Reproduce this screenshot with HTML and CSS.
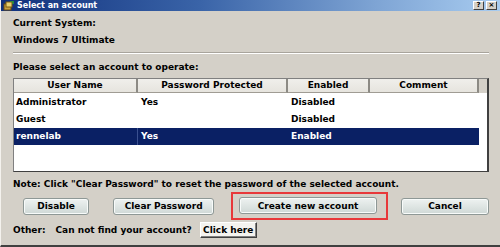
FILE: index.html
```html
<!DOCTYPE html>
<html>
<head>
<meta charset="utf-8">
<link rel="stylesheet" href="styles.css">
</head>
<body>
<div class="window">
  <div class="titlebar">
    <div class="title">
      <svg class="app-icon" width="11" height="10" viewBox="0 0 11 10">
        <rect x="1" y="3" width="7" height="6" fill="#c8a040" stroke="#6a4a10" stroke-width="1"/>
        <rect x="3" y="1" width="6" height="5" fill="#e8d070" stroke="#7a5a10" stroke-width="1"/>
        <path d="M7 0 L10 0 L10 3" fill="none" stroke="#30a030" stroke-width="1.5"/>
      </svg>
      <span>Select an account</span>
    </div>
    <div class="caption-buttons">
      <span class="cap-btn">?</span>
      <span class="cap-btn">×</span>
    </div>
  </div>
  <div class="content">
    <div class="label first">Current System:</div>
    <div class="label">Windows 7 Ultimate</div>
    <div class="separator"></div>
    <div class="label">Please select an account to operate:</div>
    <div class="table">
      <div class="thead">
        <div class="th c1">User Name</div>
        <div class="th c2">Password Protected</div>
        <div class="th c3">Enabled</div>
        <div class="th c4">Comment</div>
        <div class="th-fill"></div>
      </div>
      <div class="row">
        <div class="td c1">Administrator</div>
        <div class="td c2">Yes</div>
        <div class="td c3">Disabled</div>
        <div class="td c4"></div>
      </div>
      <div class="row">
        <div class="td c1">Guest</div>
        <div class="td c2"></div>
        <div class="td c3">Disabled</div>
        <div class="td c4"></div>
      </div>
      <div class="row selected">
        <div class="td c1">rennelab</div>
        <div class="td c2">Yes</div>
        <div class="td c3">Enabled</div>
        <div class="td c4"></div>
      </div>
    </div>
    <div class="label note">Note: Click "Clear Password" to reset the password of the selected account.</div>
    <div class="buttons">
      <button class="btn b-disable">Disable</button>
      <button class="btn b-clear">Clear Password</button>
      <div class="highlight"><button class="btn b-create">Create new account</button></div>
      <button class="btn b-cancel">Cancel</button>
    </div>
    <div class="other">
      <span class="label">Other:</span>
      <span class="label find">Can not find your account?</span>
      <button class="classic-btn">Click here</button>
    </div>
  </div>
</div>
</body>
</html>
```

FILE: styles.css
```css
* { box-sizing: border-box; }
html, body {
  margin: 0;
  padding: 0;
  background: #d4d0c8;
}
.window {
  width: 500px;
  height: 247px;
  background: #d4d0c8;
  border-left: 1px solid #f4f2ee;
  border-bottom: 2px solid #404040;
  font-family: "DejaVu Sans", sans-serif;
  font-weight: bold;
  font-size: 9px;
  color: #000;
  display: flex;
  flex-direction: column;
}
.titlebar {
  height: 11px;
  background: linear-gradient(to right, #10307c 0%, #3a64a8 40%, #7ea4d4 75%, #a8ccf0 100%);
  display: flex;
  align-items: center;
  justify-content: space-between;
  padding: 0 3px 0 2px;
}
.title {
  display: flex;
  align-items: center;
  gap: 3px;
  color: #fff;
  font-size: 8px;
  font-weight: bold;
}
.caption-buttons {
  display: flex;
  gap: 2px;
}
.cap-btn {
  width: 11px;
  height: 9px;
  background: #d4d0c8;
  border-top: 1px solid #fff;
  border-left: 1px solid #fff;
  border-right: 1px solid #404040;
  border-bottom: 1px solid #404040;
  font-size: 7px;
  line-height: 7px;
  text-align: center;
  color: #000;
}
.content {
  padding: 0 11px 0 12px;
  display: flex;
  flex-direction: column;
}
.label {
  line-height: 12px;
}
.first { margin-top: 6px; }
.content > .label + .label { margin-top: 5px; }
.separator {
  margin-top: 6px;
  height: 2px;
  border-top: 1px solid #a8a49c;
  border-bottom: 1px solid #fff;
}
.content > .separator + .label { margin-top: 7px; }
.table {
  margin-top: 5px;
  height: 94px;
  background: #fff;
  border-top: 1px solid #808080;
  border-left: 1px solid #808080;
  border-right: 2px solid #404040;
  border-bottom: 1px solid #404040;
  display: flex;
  flex-direction: column;
}
.thead {
  display: flex;
  height: 14px;
  background: #d4d0c8;
}
.th {
  background: linear-gradient(#f0efeb, #e6e4de);
  border-right: 2px solid #8c8a84;
  border-bottom: 1px solid #a09c94;
  text-align: center;
  line-height: 13px;
}
.th-fill { flex: 1; background: #d4d0c8; }
.c1 { width: 124px; }
.c2 { width: 150px; }
.c3 { width: 82px; }
.c4 { width: 109px; }
.row {
  display: flex;
  height: 17px;
  align-items: center;
}
.thead + .row { margin-top: 1px; }
.td {
  line-height: 17px;
  height: 17px;
}
.row .c1 { padding-left: 2px; }
.row .c2 { padding-left: 3px; }
.row .c3 { padding-left: 3px; }
.selected .td {
  background: #0a2064;
  color: #fff;
}
.selected .c1 { border-right: 1px solid #3a5090; }
.note { margin-top: 6px; }
.buttons {
  display: flex;
  align-items: center;
  margin-top: 2px;
  padding-left: 10px;
}
.btn {
  font: inherit;
  height: 17px;
  padding: 0;
  border: 1px solid #8e9896;
  border-radius: 3px;
  background: linear-gradient(#eef2f1, #dde4e2 55%, #cfd8d6);
  box-shadow: inset 0 0 0 1px #f8fbfa;
  color: #000;
}
.b-disable { width: 67px; }
.b-clear { width: 102px; margin-left: 24px; }
.highlight {
  margin-left: 17px;
  border: 2px solid #e8383a;
  padding: 3px 9px 4px 6px;
}
.b-create { width: 138px; }
.b-cancel { width: 89px; margin-left: 13px; }
.other {
  display: flex;
  align-items: center;
  margin-top: 2px;
}
.find { margin-left: 10px; }
.classic-btn {
  font: inherit;
  margin-left: 8px;
  height: 16px;
  width: 57px;
  padding: 0;
  background: #f4f3ef;
  border-top: 1px solid #fff;
  border-left: 1px solid #fff;
  border-right: 1px solid #404040;
  border-bottom: 1px solid #404040;
  box-shadow: inset -1px -1px 0 #808080;
  color: #000;
}
```
